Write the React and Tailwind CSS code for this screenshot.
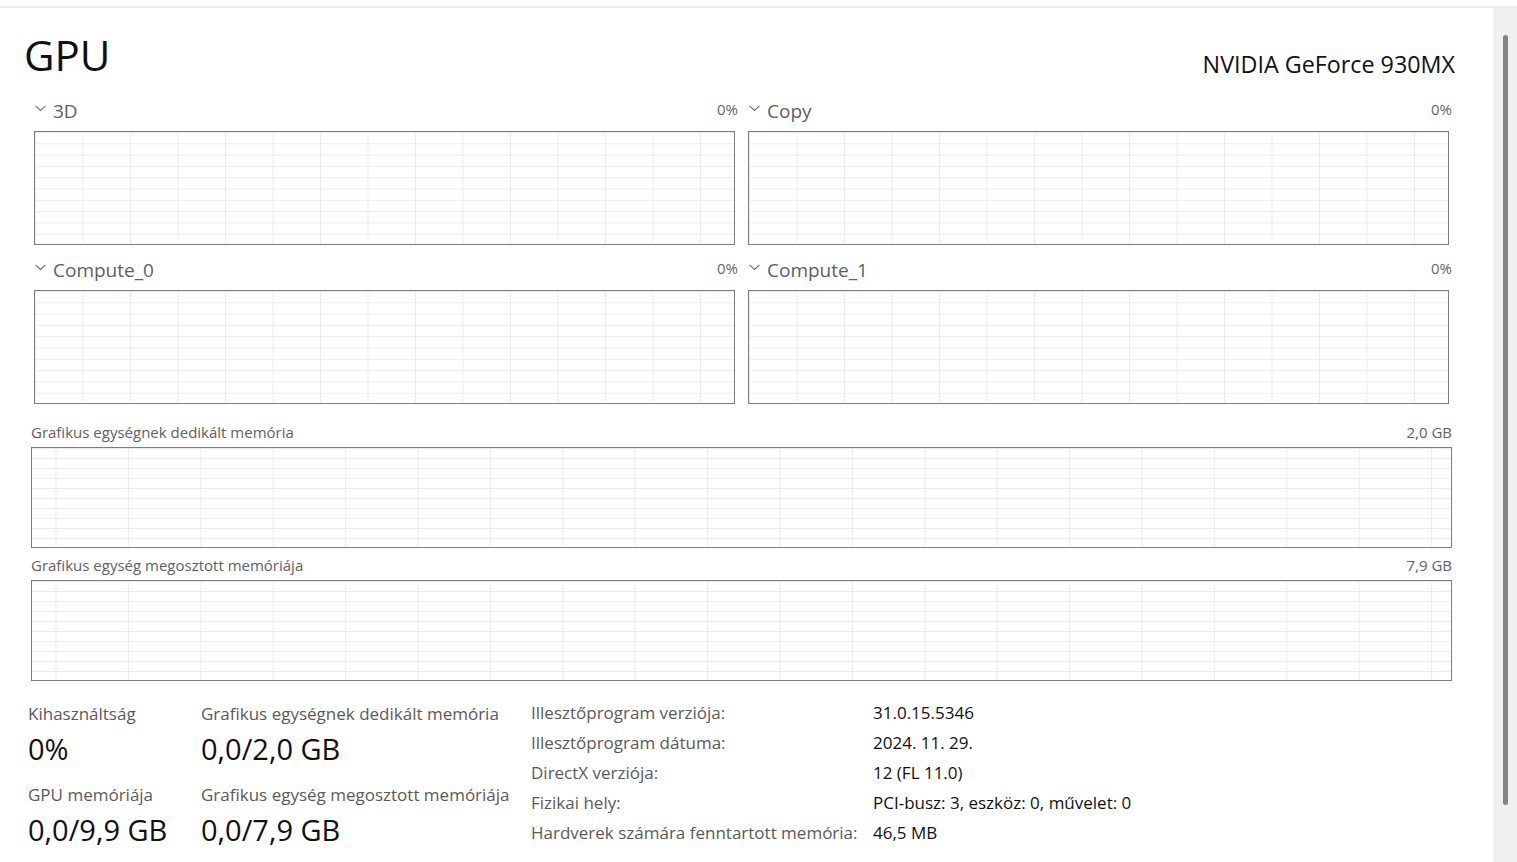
import { useId } from 'react';

const engines = [
  { name: '3D', value: '0%' },
  { name: 'Copy', value: '0%' },
  { name: 'Compute_0', value: '0%' },
  { name: 'Compute_1', value: '0%' },
];

const infoRows = [
  ['Illesztőprogram verziója:', '31.0.15.5346'],
  ['Illesztőprogram dátuma:', '2024. 11. 29.'],
  ['DirectX verziója:', '12 (FL 11.0)'],
  ['Fizikai hely:', 'PCI-busz: 3, eszköz: 0, művelet: 0'],
  ['Hardverek számára fenntartott memória:', '46,5 MB'],
];

function GridChart({ colStep, colStart, rowStep }) {
  const id = useId().replace(/:/g, '');
  return (
    <svg className="block w-full h-full">
      <defs>
        <pattern
          id={id}
          x={colStart}
          y={0}
          width={colStep}
          height={rowStep}
          patternUnits="userSpaceOnUse"
        >
          <rect x="0" y="0" width="1" height={rowStep} fill="#ececec" />
          <rect x="0" y="0" width={colStep} height="1" fill="#ececec" />
        </pattern>
      </defs>
      <rect width="100%" height="100%" fill={`url(#${id})`} />
    </svg>
  );
}

function Chevron() {
  return (
    <svg width="11" height="7" viewBox="0 0 11 7" className="mb-[5px] shrink-0">
      <polyline points="0.5,0.8 5.5,5.5 10.5,0.8" fill="none" stroke="#6b6b6b" strokeWidth="1.1" />
    </svg>
  );
}

function EngineGraph({ name, value, first }) {
  return (
    <div className={first ? '' : 'mt-[12px]'}>
      <div className="flex h-[26px] items-center justify-between mb-[7px]">
        <div className="flex items-center gap-[7px] pl-[4px]">
          <Chevron />
          <span className="text-[19px] leading-[26px] text-[#5f5f5f]">{name}</span>
        </div>
        <span className="text-[15px] text-[#666] mb-[3px]">{value}</span>
      </div>
      <div className="mx-[3px] h-[114px] border border-[#7d7d7d] bg-white">
        <GridChart colStep={47.5} colStart={47.5} rowStep={11.3} />
      </div>
    </div>
  );
}

function MemoryGraph({ label, value, className }) {
  return (
    <div className={className}>
      <div className="flex h-[20px] items-center justify-between mb-[5px] text-[15px] text-[#5f5f5f]">
        <span>{label}</span>
        <span>{value}</span>
      </div>
      <div className="h-[101px] border border-[#7d7d7d] bg-white">
        <GridChart colStep={72.4} colStart={23.5} rowStep={10} />
      </div>
    </div>
  );
}

function Stat({ label, value, last }) {
  return (
    <div className={last ? '' : 'mb-[12px]'}>
      <div className="h-[24px] leading-[24px] text-[17px] text-[#5a5a5a] whitespace-nowrap">{label}</div>
      <div className="h-[45px] leading-[45px] text-[29px] text-[#111] whitespace-nowrap">{value}</div>
    </div>
  );
}

export default function App() {
  return (
    <div className="h-[862px] w-[1517px] bg-white flex flex-col overflow-hidden font-['Open_Sans','Noto_Sans',sans-serif]">
      <div className="h-[6px] shrink-0" />
      <div className="h-[2px] bg-[#ededed] shrink-0" />
      <div className="flex flex-1 min-h-0">
        <main className="flex-1 pl-[24px] pr-[38px]">
          <header className="flex h-[90px] items-baseline justify-between pt-[25px]">
            <h1 className="text-[42px] leading-[44px] text-[#111]">GPU</h1>
            <div className="text-[23.3px] text-[#111] translate-y-[2px]">NVIDIA GeForce 930MX</div>
          </header>

          <section className="ml-[7px] mr-[3px]">
            <div className="grid grid-cols-2 gap-x-[7px]">
              {engines.map((e, i) => (
                <EngineGraph key={e.name} name={e.name} value={e.value} first={i < 2} />
              ))}
            </div>

            <MemoryGraph className="mt-[18px]" label="Grafikus egységnek dedikált memória" value="2,0 GB" />
            <MemoryGraph className="mt-[7px]" label="Grafikus egység megosztott memóriája" value="7,9 GB" />
          </section>

          <section className="flex items-start mt-[17px] ml-[4px]">
            <div className="w-[173px] pt-[4px]">
              <Stat label="Kihasználtság" value="0%" />
              <Stat label="GPU memóriája" value="0,0/9,9 GB" last />
            </div>
            <div className="w-[330px] pt-[4px]">
              <Stat label="Grafikus egységnek dedikált memória" value="0,0/2,0 GB" />
              <Stat label="Grafikus egység megosztott memóriája" value="0,0/7,9 GB" last />
            </div>
            <div className="grid grid-cols-[342px_auto] auto-rows-[30px] text-[17px]">
              {infoRows.map(([k, v]) => (
                <div key={k} className="contents">
                  <div className="leading-[30px] text-[#5a5a5a] whitespace-nowrap">{k}</div>
                  <div className="leading-[30px] text-[#111] whitespace-nowrap">{v}</div>
                </div>
              ))}
            </div>
          </section>
        </main>

        <aside className="w-[24px] shrink-0 bg-[#f0f0f0] pt-[27px] pl-[10px]">
          <div className="h-[770px] w-[5px] rounded-full bg-[#858585]" />
        </aside>
      </div>
    </div>
  );
}
